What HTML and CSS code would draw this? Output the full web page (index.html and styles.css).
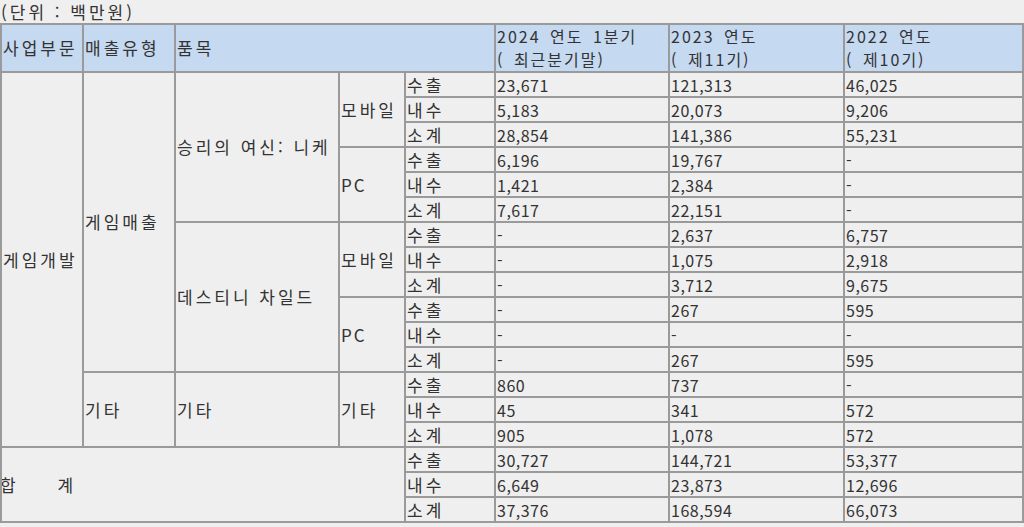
FILE: index.html
```html
<!DOCTYPE html>
<html lang="ko">
<head>
<meta charset="utf-8">
<link rel="stylesheet" href="styles.css">
</head>
<body>
<div class="unit">(단위 : 백만원)</div>
<table class="sales">
  <colgroup>
    <col class="c1"><col class="c2"><col class="c3"><col class="c4"><col class="c5"><col class="c6"><col class="c7"><col class="c8">
  </colgroup>
  <thead>
    <tr class="head">
      <th class="ko">사업부문</th>
      <th class="ko">매출유형</th>
      <th class="ko" colspan="3">품목</th>
      <th class="yr">2024 연도 1분기<br>( 최근분기말)</th>
      <th class="yr">2023 연도<br>( 제11기)</th>
      <th class="yr">2022 연도<br>( 제10기)</th>
    </tr>
  </thead>
  <tbody>
    <tr>
      <td class="ko" rowspan="15">게임개발</td>
      <td class="ko" rowspan="12">게임매출</td>
      <td class="ko" rowspan="6">승리의 여신: 니케</td>
      <td class="ko" rowspan="3">모바일</td>
      <td class="ko">수출</td><td>23,671</td><td>121,313</td><td>46,025</td>
    </tr>
    <tr><td class="ko">내수</td><td>5,183</td><td>20,073</td><td>9,206</td></tr>
    <tr><td class="ko">소계</td><td>28,854</td><td>141,386</td><td>55,231</td></tr>
    <tr>
      <td class="lat" rowspan="3">PC</td>
      <td class="ko">수출</td><td>6,196</td><td>19,767</td><td>-</td>
    </tr>
    <tr><td class="ko">내수</td><td>1,421</td><td>2,384</td><td>-</td></tr>
    <tr><td class="ko">소계</td><td>7,617</td><td>22,151</td><td>-</td></tr>
    <tr>
      <td class="ko" rowspan="6">데스티니 차일드</td>
      <td class="ko" rowspan="3">모바일</td>
      <td class="ko">수출</td><td>-</td><td>2,637</td><td>6,757</td>
    </tr>
    <tr><td class="ko">내수</td><td>-</td><td>1,075</td><td>2,918</td></tr>
    <tr><td class="ko">소계</td><td>-</td><td>3,712</td><td>9,675</td></tr>
    <tr>
      <td class="lat" rowspan="3">PC</td>
      <td class="ko">수출</td><td>-</td><td>267</td><td>595</td>
    </tr>
    <tr><td class="ko">내수</td><td>-</td><td>-</td><td>-</td></tr>
    <tr><td class="ko">소계</td><td>-</td><td>267</td><td>595</td></tr>
    <tr>
      <td class="ko" rowspan="3">기타</td>
      <td class="ko" rowspan="3">기타</td>
      <td class="ko" rowspan="3">기타</td>
      <td class="ko">수출</td><td>860</td><td>737</td><td>-</td>
    </tr>
    <tr><td class="ko">내수</td><td>45</td><td>341</td><td>572</td></tr>
    <tr><td class="ko">소계</td><td>905</td><td>1,078</td><td>572</td></tr>
    <tr>
      <td class="ko total" colspan="4" rowspan="3">합&nbsp;&nbsp;&nbsp;&nbsp;&nbsp;계</td>
      <td class="ko">수출</td><td>30,727</td><td>144,721</td><td>53,377</td>
    </tr>
    <tr><td class="ko">내수</td><td>6,649</td><td>23,873</td><td>12,696</td></tr>
    <tr><td class="ko">소계</td><td>37,376</td><td>168,594</td><td>66,073</td></tr>
  </tbody>
</table>
</body>
</html>
```

FILE: styles.css
```css
html, body {
  margin: 0;
  padding: 0;
  background: #efefef;
}
body {
  font-family: "Noto Sans CJK KR", "Noto Sans", sans-serif;
  font-size: 16px;
  color: #333;
}
.unit {
  height: 23px;
  line-height: 23px;
  padding-left: 1px;
  font-size: 17px;
  letter-spacing: 3px;
}
.sales {
  border-collapse: collapse;
  table-layout: fixed;
  width: 1022px;
  border: 2px solid #555;
}
.c1 { width: 82px; }
.c2 { width: 92px; }
.c3 { width: 164px; }
.c4 { width: 66px; }
.c5 { width: 90px; }
.c6 { width: 174px; }
.c7 { width: 175px; }
.c8 { width: 179px; }
.sales th,
.sales td {
  border: 2px solid #9a9a9a;
  padding: 0 0 0 1px;
  text-align: left;
  font-weight: normal;
  vertical-align: middle;
  white-space: nowrap;
  overflow: hidden;
  line-height: 20px;
  letter-spacing: 0.5px;
}
.sales tbody tr {
  height: 25px;
}
.sales .head {
  height: 48px;
  background: #c5d9f1;
}
.sales .ko {
  font-size: 17px;
  letter-spacing: 3px;
}
.sales .lat {
  font-size: 17px;
  letter-spacing: 2px;
}
.sales .yr {
  line-height: 23px;
  letter-spacing: 2px;
  word-spacing: 3px;
}
.sales .total {
  padding-left: 0;
  text-indent: -2px;
}
```
